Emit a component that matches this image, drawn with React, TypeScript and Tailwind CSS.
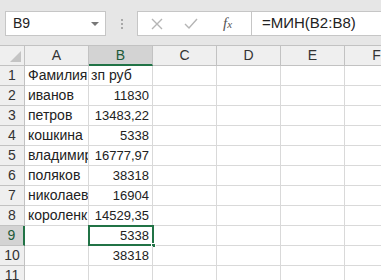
import React from "react";

const cols = ["A", "B", "C", "D", "E", "F"];
const rows: [string, string][] = [
  ["Фамилия", "зп руб"],
  ["иванов", "11830"],
  ["петров", "13483,22"],
  ["кошкина", "5338"],
  ["владимир", "16777,97"],
  ["поляков", "38318"],
  ["николаев", "16904"],
  ["короленк", "14529,35"],
  ["", "5338"],
  ["", "38318"],
  ["", ""],
];

export default function App() {
  return (
    <div
      className="w-[381px] h-[280px] overflow-hidden bg-white text-[#222]"
      style={{ fontFamily: '"Liberation Sans", Arial, sans-serif' }}
    >
      {/* formula bar */}
      <div className="h-[45px] bg-[#e6e6e6] flex items-start pt-[11px] pl-[5px]">
        <div className="w-[101px] h-[25px] bg-white border border-[#c6c6c6] flex items-center justify-between pl-[7px] pr-[6px] text-[14px]">
          <span>B9</span>
          <span className="w-0 h-0 border-l-[4px] border-r-[4px] border-t-[4px] border-l-transparent border-r-transparent border-t-[#777]"></span>
        </div>
        <div className="w-[31px] h-[25px] flex flex-col items-center justify-center gap-[2px]">
          <span className="w-[2px] h-[2px] bg-[#a8a8a8]"></span>
          <span className="w-[2px] h-[2px] bg-[#a8a8a8]"></span>
          <span className="w-[2px] h-[2px] bg-[#a8a8a8]"></span>
        </div>
        <div className="w-[114px] h-[25px] bg-white border border-[#c6c6c6] border-r-0 flex items-center">
          <svg width="12" height="12" viewBox="0 0 12 12" className="ml-[13px]">
            <path d="M1 1 L11 11 M11 1 L1 11" stroke="#b5b5b5" strokeWidth="1.4" fill="none" />
          </svg>
          <svg width="14" height="12" viewBox="0 0 14 12" className="ml-[21px]">
            <path d="M1 6 L5 10 L13 1" stroke="#b5b5b5" strokeWidth="1.4" fill="none" />
          </svg>
          <span
            className="ml-[25px] text-[15px] italic text-[#555]"
            style={{ fontFamily: '"Liberation Serif", serif' }}
          >
            f<span className="text-[11px]">x</span>
          </span>
        </div>
        <div className="flex-1 h-[25px] bg-white border border-[#c6c6c6] border-r-0 flex items-center pl-[10px] text-[15px]">
          =МИН(B2:B8)
        </div>
      </div>

      {/* sheet grid */}
      <div className="grid grid-cols-[25px_64px_64px_64px_64px_64px_64px] text-[14px]">
        <div className="h-[21px] bg-[#efefef] border-t border-r border-b border-[#c2c2c2] relative">
          <span
            className="absolute right-[3px] bottom-[3px] w-0 h-0"
            style={{ borderBottom: "11px solid #c4c4c4", borderLeft: "11px solid transparent" }}
          ></span>
        </div>
        {cols.map((c) =>
          c === "B" ? (
            <div
              key={c}
              className="h-[21px] bg-[#d3d3d3] border-t border-t-[#c2c2c2] border-r border-r-[#c2c2c2] border-b-2 border-b-[#217346] flex items-center justify-center text-[#1d5a38]"
            >
              {c}
            </div>
          ) : (
            <div
              key={c}
              className="h-[21px] bg-[#efefef] border-t border-r border-b border-[#c2c2c2] flex items-center justify-center text-[#333]"
            >
              {c}
            </div>
          )
        )}
        {rows.map((r, i) => {
          const n = i + 1;
          const sel = n === 9;
          const isText = n === 1;
          return (
            <React.Fragment key={n}>
              <div
                className={
                  sel
                    ? "h-[20px] bg-[#d3d3d3] border-b border-b-[#c2c2c2] border-r-2 border-r-[#217346] flex items-center justify-center text-[#1d5a38]"
                    : "h-[20px] bg-[#efefef] border-b border-r border-[#c2c2c2] flex items-center justify-center text-[#333]"
                }
              >
                {n}
              </div>
              <div className="h-[20px] border-b border-r border-[#d9d9d9] flex items-center pl-[3px] whitespace-nowrap overflow-hidden">
                {r[0]}
              </div>
              <div
                className={
                  isText
                    ? "h-[20px] border-b border-r border-[#d9d9d9] flex items-center pl-[2px] whitespace-nowrap"
                    : "h-[20px] border-b border-r border-[#d9d9d9] flex items-center justify-end pr-[3px] text-[13px] relative"
                }
              >
                {r[1]}
                {sel && (
                  <span className="absolute -left-[1px] -top-[1px] w-[66px] h-[21px] border-2 border-[#217346]">
                    <span className="absolute -right-[4px] -bottom-[4px] w-[5px] h-[5px] bg-[#217346] border border-white"></span>
                  </span>
                )}
              </div>
              <div className="h-[20px] border-b border-r border-[#d9d9d9]"></div>
              <div className="h-[20px] border-b border-r border-[#d9d9d9]"></div>
              <div className="h-[20px] border-b border-r border-[#d9d9d9]"></div>
              <div className="h-[20px] border-b border-r border-[#d9d9d9]"></div>
            </React.Fragment>
          );
        })}
      </div>
    </div>
  );
}
